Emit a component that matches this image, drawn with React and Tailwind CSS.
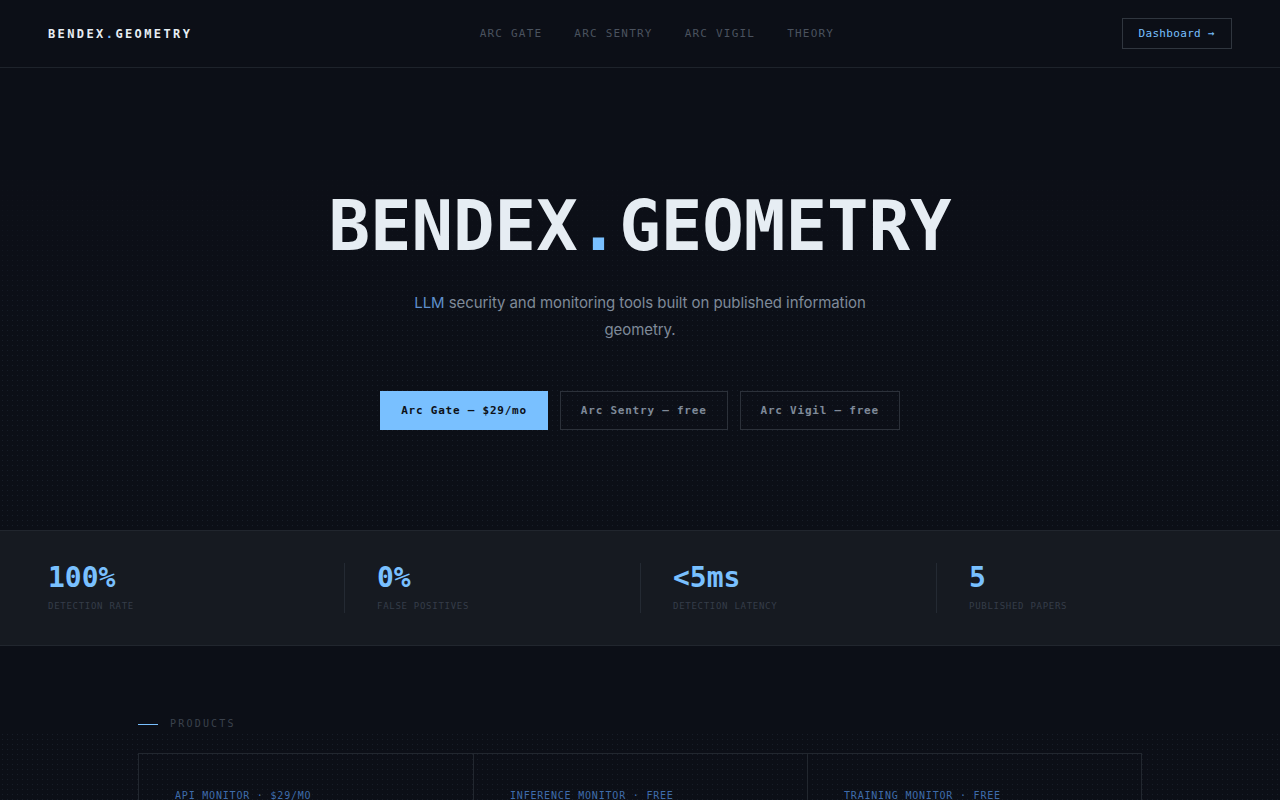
const mono = "font-['DejaVu_Sans_Mono','Liberation_Mono',monospace]";

const stats = [
  { value: "100%", label: "DETECTION RATE" },
  { value: "0%", label: "FALSE POSITIVES" },
  { value: "<5ms", label: "DETECTION LATENCY" },
  { value: "5", label: "PUBLISHED PAPERS" },
];

const products = [
  {
    tag: "API MONITOR · $29/MO",
    name: "Arc Gate",
    desc: "Drop-in proxy that screens every prompt for injection and jailbreak attempts before it reaches your model.",
  },
  {
    tag: "INFERENCE MONITOR · FREE",
    name: "Arc Sentry",
    desc: "Watches hidden-state geometry at inference time and flags anomalous requests in under five milliseconds.",
  },
  {
    tag: "TRAINING MONITOR · FREE",
    name: "Arc Vigil",
    desc: "Tracks curvature of the loss landscape during training to catch collapse and drift before it happens.",
  },
];

const dots =
  "bg-[radial-gradient(circle,#181e29_0.8px,transparent_1px)] bg-[size:5px_5px]";

export default function App() {
  return (
    <div className={`min-h-screen bg-[#0c0f17] text-[#e6edf3] ${mono}`}>
      {/* header */}
      <header className="flex h-[68px] items-center justify-between border-b border-[#1e232b] px-12">
        <div className="text-[12px] font-bold tracking-[0.2em] text-[#e6edf3]">
          BENDEX<span className="text-[#79c0ff]">.</span>GEOMETRY
        </div>
        <nav className="flex gap-8 pt-px text-[11px] tracking-[0.11em] text-[#4a525e]">
          <a>ARC GATE</a>
          <a>ARC SENTRY</a>
          <a>ARC VIGIL</a>
          <a>THEORY</a>
        </nav>
        <button className="border border-[#30363f] px-4 py-[8px] text-[11px] leading-[13px] tracking-[0.03em] text-[#79c0ff]">
          Dashboard →
        </button>
      </header>

      {/* hero */}
      <section className="relative overflow-hidden pt-[124px] pb-[100px]">
        <div
          className={`pointer-events-none absolute inset-0 ${dots} [mask-image:linear-gradient(to_bottom,transparent_20%,black_55%)]`}
        />
        <div className="relative flex flex-col items-center text-center">
          <h1 className="text-[69px] font-bold leading-none text-[#e6edf3]">
            BENDEX<span className="text-[#79c0ff]">.</span>GEOMETRY
          </h1>
          <p className="mt-7 max-w-[460px] font-['Inter',sans-serif] text-[15px] leading-[27px] tracking-[-0.005em] text-[#7f8a99]">
            <span className="text-[#5f8fcc]">LLM</span> security and monitoring
            tools built on published information geometry.
          </p>
          <div className="mt-[48px] flex gap-3 text-[11px] font-bold tracking-[0.07em]">
            <button className="border border-[#79c0ff] bg-[#79c0ff] px-5 py-3 leading-[13px] text-[#0d1117]">
              Arc Gate — $29/mo
            </button>
            <button className="border border-[#2c313a] px-5 py-3 leading-[13px] text-[#7f8a99]">
              Arc Sentry — free
            </button>
            <button className="border border-[#2c313a] px-5 py-3 leading-[13px] text-[#7f8a99]">
              Arc Vigil — free
            </button>
          </div>
        </div>
      </section>

      {/* stats */}
      <section className="border-y border-[#21262e] bg-[#161a21] px-12 py-8">
        <div className="grid grid-cols-4">
          {stats.map((s, i) => (
            <div
              key={s.label}
              className={i === 0 ? "" : "border-l border-[#242a33] pl-8"}
            >
              <div className="pt-px text-[28px] font-bold leading-none text-[#79c0ff]">
                {s.value}
              </div>
              <div className="mt-[7px] text-[9px] leading-[14px] tracking-[0.08em] text-[#353d49]">
                {s.label}
              </div>
            </div>
          ))}
        </div>
      </section>

      {/* products */}
      <section className="relative pt-[71px] pb-24">
        <div
          className={`pointer-events-none absolute inset-x-0 top-[86px] bottom-0 ${dots}`}
        />
        <div className="relative mx-auto max-w-[1004px]">
          <div className="mb-[22px] flex items-center gap-3">
            <div className="w-5 shrink-0 border-t border-[#79c0ff]" />
            <span className="text-[10px] leading-[14px] tracking-[0.22em] text-[#3b424d]">
              PRODUCTS
            </span>
          </div>
          <div className="grid grid-cols-3 border border-[#22272f]">
            {products.map((p, i) => (
              <div
                key={p.name}
                className={`px-9 pt-[36px] pb-9 ${i === 0 ? "" : "border-l border-[#22272f]"}`}
              >
                <div className="text-[10px] leading-[12px] tracking-[0.08em] text-[#3f6cab]">
                  {p.tag}
                </div>
                <div className="mt-4 text-[20px] font-bold text-[#e6edf3]">
                  {p.name}
                </div>
                <p className="mt-3 font-['Inter',sans-serif] text-[13px] leading-[22px] text-[#7f8a99]">
                  {p.desc}
                </p>
              </div>
            ))}
          </div>
        </div>
      </section>
    </div>
  );
}
